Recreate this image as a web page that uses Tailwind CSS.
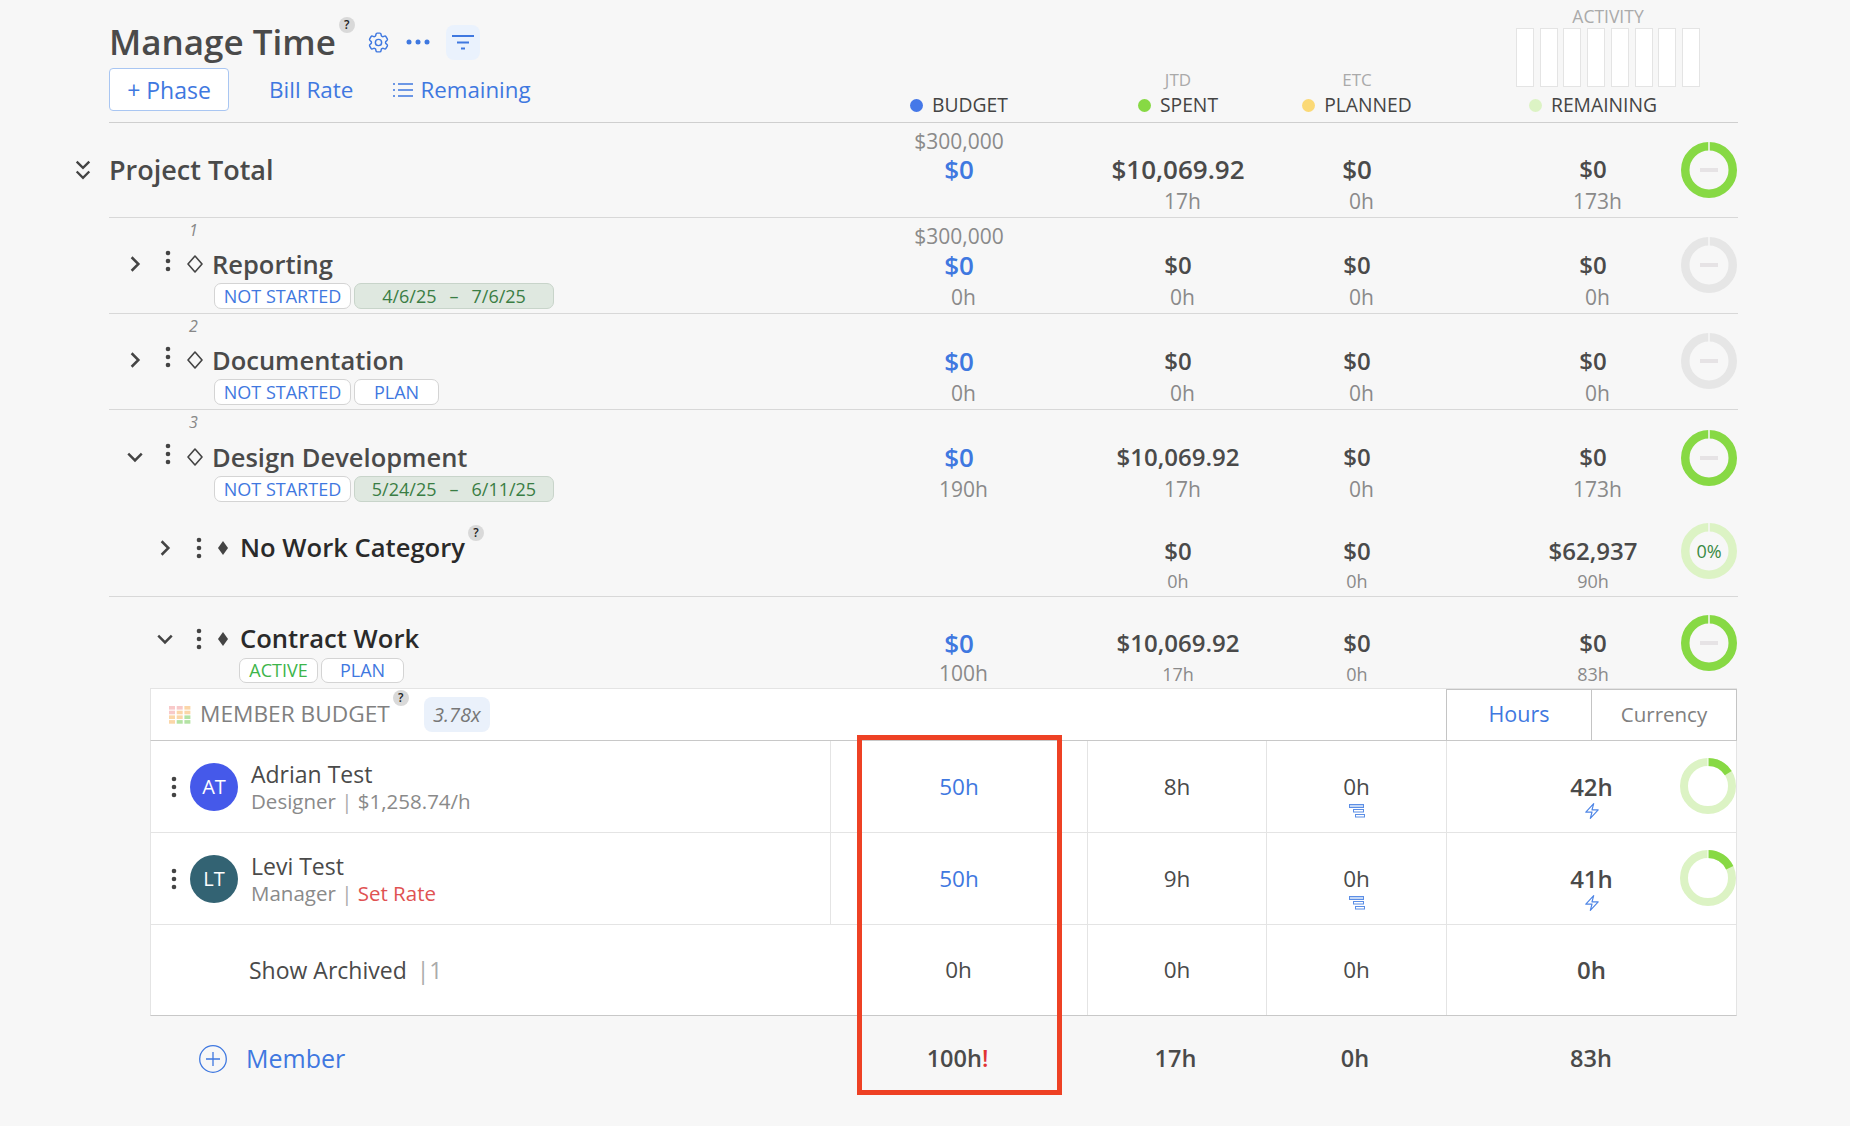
<!DOCTYPE html>
<html lang="en">

<head>
  <meta charset="UTF-8" />
  <meta name="viewport" content="width=device-width, initial-scale=1.0" />
  <title>Manage Time</title>
  <script src="https://cdn.jsdelivr.net/npm/@tailwindcss/browser@4"></script>
</head>

<body class="bg-[#f7f7f7] font-['Open_Sans',sans-serif] text-[#4a4a4a] h-[1126px] overflow-hidden">

  <div class="relative ml-[109px] w-[1629px]">

    <!-- page header -->
    <div class="grid grid-cols-[730px_240px_198px_160px_74px_164px_63px] h-[123px] border-b border-[#cfcfcf]">
      <div class="flex flex-col">
        <div class="flex items-center h-[44px] mt-[20px]">
          <h1 class="text-[35px] leading-[44px] font-semibold text-[#4a4a4a]">Manage Time</h1>
          <span class="self-start -mt-[3px] ml-[3px] w-[16px] h-[16px] rounded-full bg-[#d9d9d9] text-[12px] leading-[16px] text-center text-[#222] font-semibold">?</span>
          <svg class="ml-[11px] w-[25px] h-[25px]" viewBox="0 0 24 24" fill="none" stroke="#3f78e0" stroke-width="1.4">
            <path d="M9.594 3.94c.09-.542.56-.94 1.11-.94h2.593c.55 0 1.02.398 1.11.94l.213 1.281c.063.374.313.686.645.87.074.04.147.083.22.127.325.196.72.257 1.075.124l1.217-.456a1.125 1.125 0 0 1 1.37.49l1.296 2.247a1.125 1.125 0 0 1-.26 1.431l-1.003.827c-.293.241-.438.613-.43.992a7.723 7.723 0 0 1 0 .255c-.008.378.137.75.43.991l1.004.827c.424.35.534.955.26 1.43l-1.298 2.247a1.125 1.125 0 0 1-1.369.491l-1.217-.456c-.355-.133-.75-.072-1.076.124a6.47 6.47 0 0 1-.22.128c-.331.183-.581.495-.644.869l-.213 1.281c-.09.543-.56.94-1.11.94h-2.594c-.55 0-1.019-.398-1.11-.94l-.213-1.281c-.062-.374-.312-.686-.644-.87a6.52 6.52 0 0 1-.22-.127c-.325-.196-.72-.257-1.076-.124l-1.217.456a1.125 1.125 0 0 1-1.369-.49l-1.297-2.247a1.125 1.125 0 0 1 .26-1.431l1.004-.827c.292-.24.437-.613.43-.991a6.932 6.932 0 0 1 0-.255c.007-.38-.138-.751-.43-.992l-1.004-.827a1.125 1.125 0 0 1-.26-1.43l1.297-2.247a1.125 1.125 0 0 1 1.37-.491l1.216.456c.356.133.751.072 1.076-.124.072-.044.146-.086.22-.128.332-.183.582-.495.644-.869l.214-1.28Z" />
            <path d="M15 12a3 3 0 1 1-6 0 3 3 0 0 1 6 0Z" />
          </svg>
          <svg class="ml-[15px] w-[24px] h-[6px]" viewBox="0 0 24 6" fill="#3f78e0">
            <circle cx="3" cy="3" r="2.5" />
            <circle cx="12" cy="3" r="2.5" />
            <circle cx="21" cy="3" r="2.5" />
          </svg>
          <div class="ml-[16px] w-[34px] h-[35px] rounded-lg bg-[#eaf2fd] flex items-center justify-center">
            <svg class="w-[22px] h-[16px]" viewBox="0 0 22 16" stroke="#3f78e0" stroke-width="2">
              <path d="M0 2h22M5 8.500h12M9 14.500h4" />
            </svg>
          </div>
        </div>
        <div class="flex items-center mt-[4px]">
          <button class="w-[120px] h-[43px] pt-[2px] bg-white border border-[#a9c6f2] rounded-[4px] text-[23px] font-medium text-[#3f78e0]">+ Phase</button>
          <span class="ml-[40px] mt-[1px] text-[22.5px] text-[#3f78e0]">Bill Rate</span>
          <svg class="ml-[40px] w-[20px] h-[16px]" viewBox="0 0 20 16" stroke="#3f78e0" stroke-width="1.5">
            <path d="M0 2h2M5 2h15M0 8h2M5 8h15M0 14h2M5 14h15" />
          </svg>
          <span class="ml-[7px] mt-[1px] text-[22.3px] text-[#3f78e0]">Remaining</span>
        </div>
      </div>
      <div class="flex items-end justify-center pb-[5px]">
        <div class="flex items-center gap-[9px] h-[24px] text-[19.300px] font-medium text-[#444]">
          <span class="w-[13px] h-[13px] rounded-full bg-[#4578e8]"></span>BUDGET
        </div>
      </div>
      <div class="flex flex-col items-center justify-end pb-[5px]">
        <span class="h-[20px] mb-[3px] text-[17px] leading-[20px] text-[#aaa]">JTD</span>
        <div class="flex items-center gap-[9px] h-[24px] text-[19.300px] font-medium text-[#444]">
          <span class="w-[13px] h-[13px] rounded-full bg-[#87d944]"></span>SPENT
        </div>
      </div>
      <div class="flex flex-col items-center justify-end pb-[5px]">
        <span class="h-[20px] mb-[3px] text-[17px] leading-[20px] text-[#aaa]">ETC</span>
        <div class="flex items-center gap-[9px] h-[24px] text-[19.300px] font-medium text-[#444]">
          <span class="w-[13px] h-[13px] rounded-full bg-[#fbd976]"></span>PLANNED
        </div>
      </div>
      <div></div>
      <div class="flex flex-col pt-[7px]">
        <div class="ml-[5px] w-[184px] shrink-0">
          <div class="h-[18px] text-center text-[17.5px] leading-[18px] text-[#aaa]">ACTIVITY</div>
          <div class="flex justify-between mt-[3px] h-[59px]">
            <span class="w-[18px] bg-white border border-[#e4e4e4]"></span>
            <span class="w-[18px] bg-white border border-[#e4e4e4]"></span>
            <span class="w-[18px] bg-white border border-[#e4e4e4]"></span>
            <span class="w-[18px] bg-white border border-[#e4e4e4]"></span>
            <span class="w-[18px] bg-white border border-[#e4e4e4]"></span>
            <span class="w-[18px] bg-white border border-[#e4e4e4]"></span>
            <span class="w-[18px] bg-white border border-[#e4e4e4]"></span>
            <span class="w-[18px] bg-white border border-[#e4e4e4]"></span>
          </div>
        </div>
        <div class="flex items-center justify-center gap-[9px] mt-[6px] h-[24px] text-[19.300px] font-medium text-[#444] whitespace-nowrap">
          <span class="w-[13px] h-[13px] rounded-full bg-[#dcf3c4]"></span>REMAINING
        </div>
      </div>
      <div></div>
    </div>

    <!-- project total -->
    <div class="grid grid-cols-[730px_240px_198px_160px_74px_164px_63px] h-[95px] border-b border-[#d8d8d8]">
      <div class="flex items-center h-[94px] -ml-[35px]">
        <svg class="w-[18px] h-[21px]" viewBox="0 0 16 20" fill="none" stroke="#444" stroke-width="2.2">
          <path d="M2 1.500 8 7.500 14 1.500M2 11 8 17 14 11" />
        </svg>
        <span class="ml-[17px] text-[27px] font-semibold text-[#4a4a4a]">Project Total</span>
      </div>
      <div class="flex flex-col items-center pt-[7px]">
        <span class="h-[22px] text-[21px] leading-[22px] text-[#8a8a8a]">$300,000</span>
        <span class="h-[34px] text-[26px] leading-[34px] font-semibold text-[#3f78e0]">$0</span>
      </div>
      <div class="flex flex-col items-center pt-[29px]">
        <span class="h-[34px] text-[26px] leading-[34px] font-semibold">$10,069.92</span>
        <span class="h-[31px] pl-[9px] text-[21px] leading-[31px] text-[#8a8a8a]">17h</span>
      </div>
      <div class="flex flex-col items-center pt-[29px]">
        <span class="h-[34px] text-[26px] leading-[34px] font-semibold">$0</span>
        <span class="h-[31px] pl-[9px] text-[21px] leading-[31px] text-[#8a8a8a]">0h</span>
      </div>
      <div></div>
      <div class="flex flex-col items-center pt-[29px]">
        <span class="h-[34px] text-[24px] leading-[34px] font-semibold">$0</span>
        <span class="h-[31px] pl-[9px] text-[21px] leading-[31px] text-[#8a8a8a]">173h</span>
      </div>
      <div class="flex justify-end pr-px pt-[19px]">
        <svg class="w-[56px] h-[56px]" viewBox="0 0 56 56" fill="none">
          <circle cx="28" cy="28" r="23.750" stroke="#87d944" stroke-width="8.500" />
          <path d="M28 0v9" stroke="#f7f7f7" stroke-width="1.500" />
          <path d="M19 28h18" stroke="#e6e3e5" stroke-width="4" />
        </svg>
      </div>
    </div>

    <!-- phase 1 -->
    <div class="grid grid-cols-[730px_240px_198px_160px_74px_164px_63px] h-[96px] border-b border-[#d8d8d8]">
      <div class="flex flex-col">
        <span class="h-[24px] pl-[80px] text-[16px] leading-[24px] italic text-[#888]">1</span>
        <div class="flex items-center h-[34px] mt-[5px] pl-[17px]">
          <svg class="w-[18px] h-[18px]" viewBox="0 0 16 16" fill="none" stroke="#444" stroke-width="2.200"><path d="M5 2l6 6-6 6" /></svg>
          <svg class="ml-[21px] -mt-[6px] w-[6px] h-[22px]" viewBox="0 0 6 22" fill="#444"><circle cx="3" cy="3" r="2.300" /><circle cx="3" cy="11" r="2.300" /><circle cx="3" cy="19" r="2.300" /></svg>
          <svg class="ml-[16px] w-[16px] h-[18px]" viewBox="0 0 16 18" fill="none" stroke="#444" stroke-width="1.600"><path d="M8 1l7 8-7 8-7-8z" stroke-linejoin="round" /></svg>
          <span class="ml-[9px] text-[25.5px] leading-[34px] font-semibold text-[#4a4a4a]">Reporting</span>
        </div>
        <div class="flex gap-[3px] ml-[105px] mt-[2px]">
          <span class="w-[137px] h-[26px] rounded-[7px] bg-white border border-[#d4d4d4] text-[18px] leading-[24px] text-center text-[#3f78e0]">NOT STARTED</span>
          <span class="flex justify-center gap-[13px] w-[200px] h-[26px] rounded-[7px] bg-[#dfe8e0] border border-[#c8d4ca] text-[18px] leading-[24px] text-[#3a7d44]"><span>4/6/25</span><span>–</span><span>7/6/25</span></span>
        </div>
      </div>
      <div class="flex flex-col items-center pt-[6px]">
        <span class="h-[24px] text-[21px] leading-[24px] text-[#8a8a8a]">$300,000</span>
        <span class="h-[34px] text-[26px] leading-[34px] font-semibold text-[#3f78e0]">$0</span>
        <span class="h-[30px] pl-[9px] text-[21px] leading-[30px] text-[#8a8a8a]">0h</span>
      </div>
      <div class="flex flex-col items-center pt-[30px]">
        <span class="h-[34px] text-[24px] leading-[34px] font-semibold">$0</span>
        <span class="h-[30px] pl-[9px] text-[21px] leading-[30px] text-[#8a8a8a]">0h</span>
      </div>
      <div class="flex flex-col items-center pt-[30px]">
        <span class="h-[34px] text-[24px] leading-[34px] font-semibold">$0</span>
        <span class="h-[30px] pl-[9px] text-[21px] leading-[30px] text-[#8a8a8a]">0h</span>
      </div>
      <div></div>
      <div class="flex flex-col items-center pt-[30px]">
        <span class="h-[34px] text-[24px] leading-[34px] font-semibold">$0</span>
        <span class="h-[30px] pl-[9px] text-[21px] leading-[30px] text-[#8a8a8a]">0h</span>
      </div>
      <div class="flex justify-end pr-px pt-[19px]">
        <svg class="w-[56px] h-[56px]" viewBox="0 0 56 56" fill="none">
          <circle cx="28" cy="28" r="23.750" stroke="#e6e6e6" stroke-width="8.500" />
          <path d="M28 0v9" stroke="#f7f7f7" stroke-width="1.500" />
          <path d="M19 28h18" stroke="#e6e3e5" stroke-width="4" />
        </svg>
      </div>
    </div>

    <!-- phase 2 -->
    <div class="grid grid-cols-[730px_240px_198px_160px_74px_164px_63px] h-[96px] border-b border-[#d8d8d8]">
      <div class="flex flex-col">
        <span class="h-[24px] pl-[80px] text-[16px] leading-[24px] italic text-[#888]">2</span>
        <div class="flex items-center h-[34px] mt-[5px] pl-[17px]">
          <svg class="w-[18px] h-[18px]" viewBox="0 0 16 16" fill="none" stroke="#444" stroke-width="2.200"><path d="M5 2l6 6-6 6" /></svg>
          <svg class="ml-[21px] -mt-[6px] w-[6px] h-[22px]" viewBox="0 0 6 22" fill="#444"><circle cx="3" cy="3" r="2.300" /><circle cx="3" cy="11" r="2.300" /><circle cx="3" cy="19" r="2.300" /></svg>
          <svg class="ml-[16px] w-[16px] h-[18px]" viewBox="0 0 16 18" fill="none" stroke="#444" stroke-width="1.600"><path d="M8 1l7 8-7 8-7-8z" stroke-linejoin="round" /></svg>
          <span class="ml-[9px] text-[25.5px] leading-[34px] font-semibold text-[#4a4a4a]">Documentation</span>
        </div>
        <div class="flex gap-[3px] ml-[105px] mt-[2px]">
          <span class="w-[137px] h-[26px] rounded-[7px] bg-white border border-[#d4d4d4] text-[18px] leading-[24px] text-center text-[#3f78e0]">NOT STARTED</span>
          <span class="w-[85px] h-[26px] rounded-[7px] bg-white border border-[#d4d4d4] text-[18px] leading-[24px] text-center text-[#3f78e0]">PLAN</span>
        </div>
      </div>
      <div class="flex flex-col items-center pt-[30px]">
        <span class="h-[34px] text-[26px] leading-[34px] font-semibold text-[#3f78e0]">$0</span>
        <span class="h-[30px] pl-[9px] text-[21px] leading-[30px] text-[#8a8a8a]">0h</span>
      </div>
      <div class="flex flex-col items-center pt-[30px]">
        <span class="h-[34px] text-[24px] leading-[34px] font-semibold">$0</span>
        <span class="h-[30px] pl-[9px] text-[21px] leading-[30px] text-[#8a8a8a]">0h</span>
      </div>
      <div class="flex flex-col items-center pt-[30px]">
        <span class="h-[34px] text-[24px] leading-[34px] font-semibold">$0</span>
        <span class="h-[30px] pl-[9px] text-[21px] leading-[30px] text-[#8a8a8a]">0h</span>
      </div>
      <div></div>
      <div class="flex flex-col items-center pt-[30px]">
        <span class="h-[34px] text-[24px] leading-[34px] font-semibold">$0</span>
        <span class="h-[30px] pl-[9px] text-[21px] leading-[30px] text-[#8a8a8a]">0h</span>
      </div>
      <div class="flex justify-end pr-px pt-[19px]">
        <svg class="w-[56px] h-[56px]" viewBox="0 0 56 56" fill="none">
          <circle cx="28" cy="28" r="23.750" stroke="#e6e6e6" stroke-width="8.500" />
          <path d="M28 0v9" stroke="#f7f7f7" stroke-width="1.500" />
          <path d="M19 28h18" stroke="#e6e3e5" stroke-width="4" />
        </svg>
      </div>
    </div>

    <!-- phase 3 -->
    <div class="grid grid-cols-[730px_240px_198px_160px_74px_164px_63px] h-[96px]">
      <div class="flex flex-col">
        <span class="h-[24px] pl-[80px] text-[16px] leading-[24px] italic text-[#888]">3</span>
        <div class="flex items-center h-[34px] mt-[6px] pl-[17px]">
          <svg class="w-[18px] h-[18px]" viewBox="0 0 16 16" fill="none" stroke="#444" stroke-width="2.200"><path d="M2 5l6 6 6-6" /></svg>
          <svg class="ml-[21px] -mt-[6px] w-[6px] h-[22px]" viewBox="0 0 6 22" fill="#444"><circle cx="3" cy="3" r="2.300" /><circle cx="3" cy="11" r="2.300" /><circle cx="3" cy="19" r="2.300" /></svg>
          <svg class="ml-[16px] w-[16px] h-[18px]" viewBox="0 0 16 18" fill="none" stroke="#444" stroke-width="1.600"><path d="M8 1l7 8-7 8-7-8z" stroke-linejoin="round" /></svg>
          <span class="ml-[9px] text-[25.5px] leading-[34px] font-semibold text-[#4a4a4a]">Design Development</span>
        </div>
        <div class="flex gap-[3px] ml-[105px] mt-[2px]">
          <span class="w-[137px] h-[26px] rounded-[7px] bg-white border border-[#d4d4d4] text-[18px] leading-[24px] text-center text-[#3f78e0]">NOT STARTED</span>
          <span class="flex justify-center gap-[13px] w-[200px] h-[26px] rounded-[7px] bg-[#dfe8e0] border border-[#c8d4ca] text-[18px] leading-[24px] text-[#3a7d44]"><span>5/24/25</span><span>–</span><span>6/11/25</span></span>
        </div>
      </div>
      <div class="flex flex-col items-center pt-[30px]">
        <span class="h-[34px] text-[26px] leading-[34px] font-semibold text-[#3f78e0]">$0</span>
        <span class="h-[31px] pl-[9px] text-[21px] leading-[31px] text-[#8a8a8a]">190h</span>
      </div>
      <div class="flex flex-col items-center pt-[30px]">
        <span class="h-[34px] text-[24px] leading-[34px] font-semibold">$10,069.92</span>
        <span class="h-[31px] pl-[9px] text-[21px] leading-[31px] text-[#8a8a8a]">17h</span>
      </div>
      <div class="flex flex-col items-center pt-[30px]">
        <span class="h-[34px] text-[24px] leading-[34px] font-semibold">$0</span>
        <span class="h-[31px] pl-[9px] text-[21px] leading-[31px] text-[#8a8a8a]">0h</span>
      </div>
      <div></div>
      <div class="flex flex-col items-center pt-[30px]">
        <span class="h-[34px] text-[24px] leading-[34px] font-semibold">$0</span>
        <span class="h-[31px] pl-[9px] text-[21px] leading-[31px] text-[#8a8a8a]">173h</span>
      </div>
      <div class="flex justify-end pr-px pt-[20px]">
        <svg class="w-[56px] h-[56px]" viewBox="0 0 56 56" fill="none">
          <circle cx="28" cy="28" r="23.750" stroke="#87d944" stroke-width="8.500" />
          <path d="M28 0v9" stroke="#f7f7f7" stroke-width="1.500" />
          <path d="M19 28h18" stroke="#e6e3e5" stroke-width="4" />
        </svg>
      </div>
    </div>

    <!-- no work category -->
    <div class="grid grid-cols-[730px_240px_198px_160px_74px_164px_63px] h-[91px] border-b border-[#d8d8d8]">
      <div class="flex items-center h-[34px] mt-[25px] pl-[47px]">
        <svg class="w-[18px] h-[18px]" viewBox="0 0 16 16" fill="none" stroke="#444" stroke-width="2.200"><path d="M5 2l6 6-6 6" /></svg>
        <svg class="ml-[22px] w-[6px] h-[22px]" viewBox="0 0 6 22" fill="#444"><circle cx="3" cy="3" r="2.300" /><circle cx="3" cy="11" r="2.300" /><circle cx="3" cy="19" r="2.300" /></svg>
        <svg class="ml-[15px] w-[12px] h-[16px]" viewBox="0 0 12 16" fill="#444"><path d="M6 1l5 7-5 7-5-7z" /></svg>
        <span class="ml-[11px] text-[25.6px] leading-[34px] font-semibold text-[#2a2a2a]">No Work Category</span>
        <span class="self-start -mt-[6px] ml-[3px] w-[16px] h-[16px] rounded-full bg-[#d9d9d9] text-[12px] leading-[16px] text-center text-[#222] font-semibold">?</span>
      </div>
      <div></div>
      <div class="flex flex-col items-center pt-[28px]">
        <span class="h-[34px] text-[24px] leading-[34px] font-semibold">$0</span>
        <span class="h-[26px] text-[18px] leading-[26px] text-[#8a8a8a]">0h</span>
      </div>
      <div class="flex flex-col items-center pt-[28px]">
        <span class="h-[34px] text-[24px] leading-[34px] font-semibold">$0</span>
        <span class="h-[26px] text-[18px] leading-[26px] text-[#8a8a8a]">0h</span>
      </div>
      <div></div>
      <div class="flex flex-col items-center pt-[28px]">
        <span class="h-[34px] text-[24px] leading-[34px] font-semibold">$62,937</span>
        <span class="h-[26px] text-[18px] leading-[26px] text-[#8a8a8a]">90h</span>
      </div>
      <div class="flex justify-end pr-px pt-[17px]">
        <div class="relative w-[56px] h-[56px]">
          <svg class="w-[56px] h-[56px]" viewBox="0 0 56 56" fill="none">
            <circle cx="28" cy="28" r="23.750" stroke="#dcf3c4" stroke-width="8.500" />
            <path d="M28 0v9" stroke="#f7f7f7" stroke-width="1.500" />
          </svg>
          <span class="absolute inset-0 flex items-center justify-center text-[18px] font-medium text-[#3a8a44]">0%</span>
        </div>
      </div>
    </div>

    <!-- contract work -->
    <div class="grid grid-cols-[730px_240px_198px_160px_74px_164px_63px] h-[91px]">
      <div class="flex flex-col">
        <div class="flex items-center h-[34px] mt-[25px] pl-[47px]">
          <svg class="w-[18px] h-[18px]" viewBox="0 0 16 16" fill="none" stroke="#444" stroke-width="2.200"><path d="M2 5l6 6 6-6" /></svg>
          <svg class="ml-[22px] w-[6px] h-[22px]" viewBox="0 0 6 22" fill="#444"><circle cx="3" cy="3" r="2.300" /><circle cx="3" cy="11" r="2.300" /><circle cx="3" cy="19" r="2.300" /></svg>
          <svg class="ml-[15px] w-[12px] h-[16px]" viewBox="0 0 12 16" fill="#444"><path d="M6 1l5 7-5 7-5-7z" /></svg>
          <span class="ml-[11px] text-[25.6px] leading-[34px] font-semibold text-[#2a2a2a]">Contract Work</span>
        </div>
        <div class="flex gap-[3px] ml-[130px] mt-[2px]">
          <span class="w-[79px] h-[25px] rounded-[7px] bg-white border border-[#d4d4d4] text-[18px] leading-[23px] text-center text-[#3db54a]">ACTIVE</span>
          <span class="w-[83px] h-[25px] rounded-[7px] bg-white border border-[#d4d4d4] text-[18px] leading-[23px] text-center text-[#3f78e0]">PLAN</span>
        </div>
      </div>
      <div class="flex flex-col items-center pt-[29px]">
        <span class="h-[34px] text-[26px] leading-[34px] font-semibold text-[#3f78e0]">$0</span>
        <span class="h-[26px] pl-[9px] text-[21px] leading-[26px] text-[#8a8a8a]">100h</span>
      </div>
      <div class="flex flex-col items-center pt-[29px]">
        <span class="h-[34px] text-[24px] leading-[34px] font-semibold">$10,069.92</span>
        <span class="h-[28px] text-[18px] leading-[28px] text-[#8a8a8a]">17h</span>
      </div>
      <div class="flex flex-col items-center pt-[29px]">
        <span class="h-[34px] text-[24px] leading-[34px] font-semibold">$0</span>
        <span class="h-[28px] text-[18px] leading-[28px] text-[#8a8a8a]">0h</span>
      </div>
      <div></div>
      <div class="flex flex-col items-center pt-[29px]">
        <span class="h-[34px] text-[24px] leading-[34px] font-semibold">$0</span>
        <span class="h-[28px] text-[18px] leading-[28px] text-[#8a8a8a]">83h</span>
      </div>
      <div class="flex justify-end pr-px pt-[18px]">
        <svg class="w-[56px] h-[56px]" viewBox="0 0 56 56" fill="none">
          <circle cx="28" cy="28" r="23.750" stroke="#87d944" stroke-width="8.500" />
          <path d="M28 0v9" stroke="#f7f7f7" stroke-width="1.500" />
          <path d="M19 28h18" stroke="#e6e3e5" stroke-width="4" />
        </svg>
      </div>
    </div>

    <!-- member budget table -->
    <div class="ml-[41px] w-[1587px]">
      <div class="flex items-center h-[53px] bg-white border-l border-t border-b border-[#e4e4e4] border-b-[#c8c8c8]">
        <svg class="ml-[18px] w-[22px] h-[18px]" viewBox="0 0 22 18">
          <g fill="#f8c9c9"><rect width="6" height="3.600" /><rect x="7.700" width="6" height="3.600" /><rect y="4.700" width="6" height="3.600" /></g>
          <g fill="#fbd6a8"><rect x="15.400" width="6" height="3.600" /><rect x="7.700" y="4.700" width="6" height="3.600" /><rect x="15.400" y="4.700" width="6" height="3.600" /><rect y="9.400" width="6" height="3.600" /><rect x="7.700" y="9.400" width="6" height="3.600" /><rect y="14.100" width="6" height="3.600" /></g>
          <g fill="#b4e3a4"><rect x="15.400" y="9.400" width="6" height="3.600" /><rect x="7.700" y="14.100" width="6" height="3.600" /><rect x="15.400" y="14.100" width="6" height="3.600" /></g>
        </svg>
        <span class="ml-[9px] text-[22.7px] font-medium text-[#808080] whitespace-nowrap">MEMBER BUDGET</span>
        <span class="self-start mt-[1px] ml-[3px] w-[16px] h-[16px] rounded-full bg-[#d9d9d9] text-[12px] leading-[16px] text-center text-[#222] font-semibold">?</span>
        <span class="ml-[15px] w-[66px] h-[35px] rounded-lg bg-[#eaf1fb] text-[20px] leading-[35px] italic text-center text-[#777]">3.78x</span>
        <div class="ml-auto flex h-full border-l border-r border-t border-[#c4c4c4] -mt-px w-[291px]">
          <span class="flex-1 flex items-center justify-center text-[21.5px] font-medium text-[#3f78e0] border-r border-[#c4c4c4]">Hours</span>
          <span class="flex-1 flex items-center justify-center text-[20.5px] text-[#808080]">Currency</span>
        </div>
      </div>

      <div class="bg-white border-l border-r border-b border-[#e4e4e4] border-b-[#c8c8c8]">
        <div class="grid grid-cols-[679px_257px_179px_180px_1fr] h-[92px] border-b border-[#e4e4e4]">
          <div class="flex items-center">
            <svg class="ml-[20px] w-[6px] h-[22px]" viewBox="0 0 6 22" fill="#444"><circle cx="3" cy="3" r="2.300" /><circle cx="3" cy="11" r="2.300" /><circle cx="3" cy="19" r="2.300" /></svg>
            <span class="ml-[13px] w-[48px] h-[48px] rounded-full bg-[#4559ea] text-[20px] leading-[48px] font-medium text-center text-white">AT</span>
            <div class="ml-[13px] flex flex-col">
              <span class="text-[23px] leading-[28px] font-medium text-[#4a4a4a]">Adrian Test</span>
              <span class="text-[20.5px] leading-[26px] text-[#8a8a8a]">Designer <span class="text-[#aaa]">|</span> $1,258.74/h</span>
            </div>
          </div>
          <div class="flex items-center justify-center border-l border-[#e4e4e4] text-[22.5px] text-[#3f78e0]">50h</div>
          <div class="flex items-center justify-center border-l border-[#e4e4e4] text-[22.5px]">8h</div>
          <div class="flex flex-col items-center justify-center border-l border-[#e4e4e4] pt-[17px]">
            <span class="h-[28px] text-[22.5px] leading-[28px]">0h</span>
            <svg class="mt-[3px] w-[16px] h-[14px]" viewBox="0 0 16 14" stroke="#5b8ee6" fill="none"><rect x="0.500" y="0.500" width="14" height="3" fill="#c5d8f6" /><rect x="4.500" y="5.500" width="10" height="2.500" /><rect x="6.500" y="10.500" width="9" height="2.500" /></svg>
          </div>
          <div class="relative flex flex-col items-center justify-center border-l border-[#e4e4e4] pt-[19px]">
            <span class="h-[28px] text-[24px] leading-[28px] font-semibold">42h</span>
            <svg class="mt-[1px] w-[18px] h-[18px]" viewBox="0 0 24 24" fill="none" stroke="#4f86e6" stroke-width="1.600"><path d="m3.750 13.500 10.500-11.250L12 10.500h8.250L9.750 21.750 12 13.500H3.750Z" stroke-linejoin="round" /></svg>
            <svg class="absolute right-0 top-[17px] w-[56px] h-[56px]" viewBox="0 0 56 56" fill="none">
              <circle cx="28" cy="28" r="24" stroke="#dcf3c4" stroke-width="8" />
              <circle cx="28" cy="28" r="24" stroke="#87d944" stroke-width="8" pathLength="100" stroke-dasharray="16 84" transform="rotate(-90 28 28)" />
              <path d="M28 0v8" stroke="#fff" stroke-width="1" />
            </svg>
          </div>
        </div>

        <div class="grid grid-cols-[679px_257px_179px_180px_1fr] h-[92px] border-b border-[#e4e4e4]">
          <div class="flex items-center">
            <svg class="ml-[20px] w-[6px] h-[22px]" viewBox="0 0 6 22" fill="#444"><circle cx="3" cy="3" r="2.300" /><circle cx="3" cy="11" r="2.300" /><circle cx="3" cy="19" r="2.300" /></svg>
            <span class="ml-[13px] w-[48px] h-[48px] rounded-full bg-[#336373] text-[20px] leading-[48px] font-medium text-center text-white">LT</span>
            <div class="ml-[13px] flex flex-col">
              <span class="text-[23px] leading-[28px] font-medium text-[#4a4a4a]">Levi Test</span>
              <span class="text-[20.5px] leading-[26px] text-[#8a8a8a]">Manager <span class="text-[#aaa]">|</span> <span class="text-[#e05252]">Set Rate</span></span>
            </div>
          </div>
          <div class="flex items-center justify-center border-l border-[#e4e4e4] text-[22.5px] text-[#3f78e0]">50h</div>
          <div class="flex items-center justify-center border-l border-[#e4e4e4] text-[22.5px]">9h</div>
          <div class="flex flex-col items-center justify-center border-l border-[#e4e4e4] pt-[17px]">
            <span class="h-[28px] text-[22.5px] leading-[28px]">0h</span>
            <svg class="mt-[3px] w-[16px] h-[14px]" viewBox="0 0 16 14" stroke="#5b8ee6" fill="none"><rect x="0.500" y="0.500" width="14" height="3" fill="#c5d8f6" /><rect x="4.500" y="5.500" width="10" height="2.500" /><rect x="6.500" y="10.500" width="9" height="2.500" /></svg>
          </div>
          <div class="relative flex flex-col items-center justify-center border-l border-[#e4e4e4] pt-[19px]">
            <span class="h-[28px] text-[24px] leading-[28px] font-semibold">41h</span>
            <svg class="mt-[1px] w-[18px] h-[18px]" viewBox="0 0 24 24" fill="none" stroke="#4f86e6" stroke-width="1.600"><path d="m3.750 13.500 10.500-11.250L12 10.500h8.250L9.750 21.750 12 13.500H3.750Z" stroke-linejoin="round" /></svg>
            <svg class="absolute right-0 top-[17px] w-[56px] h-[56px]" viewBox="0 0 56 56" fill="none">
              <circle cx="28" cy="28" r="24" stroke="#dcf3c4" stroke-width="8" />
              <circle cx="28" cy="28" r="24" stroke="#87d944" stroke-width="8" pathLength="100" stroke-dasharray="18 82" transform="rotate(-90 28 28)" />
              <path d="M28 0v8" stroke="#fff" stroke-width="1" />
            </svg>
          </div>
        </div>

        <div class="grid grid-cols-[679px_257px_179px_180px_1fr] h-[90px]">
          <div class="flex items-center pl-[98px] text-[23px] font-medium text-[#4a4a4a]">Show Archived <span class="ml-[10px] font-normal text-[#aaa]">|1</span></div>
          <div class="flex items-center justify-center text-[22.5px]">0h</div>
          <div class="flex items-center justify-center border-l border-[#e4e4e4] text-[22.5px]">0h</div>
          <div class="flex items-center justify-center border-l border-[#e4e4e4] text-[22.5px]">0h</div>
          <div class="flex items-center justify-center border-l border-[#e4e4e4] text-[24px] font-semibold">0h</div>
        </div>
      </div>

      <div class="grid grid-cols-[679px_257px_179px_180px_1fr] h-[86px] items-center">
        <div class="flex items-center pl-[49px]">
          <svg class="w-[28px] h-[28px]" viewBox="0 0 28 28" fill="none" stroke="#3f78e0" stroke-width="1.300"><circle cx="14" cy="14" r="13.300" /><path d="M7 14h14M14 7v14" /></svg>
          <span class="ml-[19px] text-[25px] font-medium text-[#3f78e0]">Member</span>
        </div>
        <div class="text-center text-[23.5px] font-semibold">100h<span class="text-[#e03434]">!</span></div>
        <div class="text-center text-[23.5px] font-semibold">17h</div>
        <div class="text-center text-[23.5px] font-semibold">0h</div>
        <div class="text-center text-[23.5px] font-semibold">83h</div>
      </div>
    </div>

    <!-- highlight box -->
    <div class="absolute left-[748px] top-[735px] w-[205px] h-[360px] border-[5px] border-[#ee4124]"></div>
  </div>
</body>

</html>
